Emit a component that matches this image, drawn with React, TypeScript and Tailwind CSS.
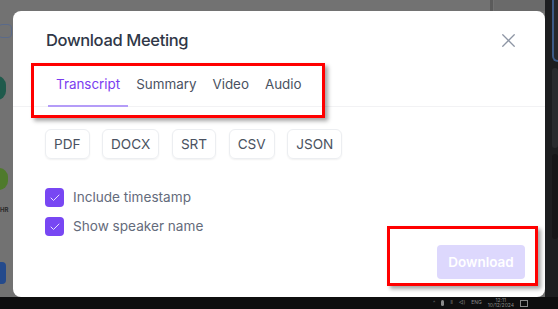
import { Check, X } from "lucide-react";

const TABS = ["Transcript", "Summary", "Video", "Audio"];
const FORMATS = ["PDF", "DOCX", "SRT", "CSV", "JSON"];
const OPTIONS = ["Include timestamp", "Show speaker name"];

export default function App() {
  return (
    <div
      className="relative w-[558px] h-[309px] overflow-hidden bg-[#727272] flex flex-col"
      style={{ fontFamily: "Inter, 'Noto Sans', sans-serif" }}
    >
      {/* dimmed app behind the dialog */}
      <div className="absolute left-[-2px] top-[24px] w-[14px] h-[14px] border border-[#5a6a8a] rounded-sm" />
      <div className="absolute left-[-12px] top-[76px] w-[18px] h-[24px] rounded-full bg-[#1f5a4c]" />
      <div className="absolute left-[-10px] top-[168px] w-[18px] h-[22px] rounded-full bg-[#4f7a2c]" />
      <div className="absolute left-0 top-[205px] text-[6px] font-bold text-[#2a2a2a]">HR</div>
      <div className="absolute left-[-4px] top-[262px] w-[10px] h-[22px] rounded-sm bg-[#244a8c]" />
      <div className="absolute left-[490px] top-0 w-[3px] h-[11px] bg-[#5b5b5b]" />
      <div className="absolute left-[494px] top-0 w-[51px] h-[11px] bg-[#6a6a6a]" />

      <div className="flex h-[297px]">
        <div className="w-[13px]" />
        <div className="w-[532px] flex flex-col">
          <div className="h-[11px]" />
          <div className="relative h-[286px] bg-white rounded-[8px] flex flex-col">
            {/* header */}
            <div className="flex items-center justify-between pl-[33px] pr-[25px] pt-[15px] h-[43px]">
              <h2 className="text-[16.5px] tracking-[-0.35px] leading-[28px] font-medium text-[#2f3747]">
                Download Meeting
              </h2>
              <X size={23} strokeWidth={1.3} className="text-[#8d95a4]" />
            </div>

            {/* tabs */}
            <div className="mt-[10px] flex px-[35px] border-b border-[#f2f2f4]">
              {TABS.map((t, i) => (
                <div
                  key={t}
                  className={`px-2 pt-[10px] pb-[11px] text-[13.4px] leading-[20px] border-b-2 -mb-px ${
                    i === 0 ? "text-[#7b3df0] border-[#b49cf8]" : "text-[#4a5261] border-transparent"
                  }`}
                >
                  {t}
                </div>
              ))}
            </div>

            {/* formats */}
            <div className="mt-[22px] flex gap-[12.5px] pl-[32px]">
              {FORMATS.map((f) => (
                <div
                  key={f}
                  className="h-[30px] px-[8px] flex items-center rounded-md border border-[#eceef1] shadow-[0_1px_2px_rgba(0,0,0,0.06)] text-[13.6px] text-[#4a5261]"
                >
                  {f}
                </div>
              ))}
            </div>

            {/* options */}
            <div className="mt-[29px] flex flex-col gap-[10px] pl-[32px]">
              {OPTIONS.map((o) => (
                <div key={o} className="flex items-center gap-[9px] h-[19px]">
                  <div className="w-[19px] h-[19px] rounded-[4px] bg-[#7847f3] flex items-center justify-center">
                    <Check size={12} strokeWidth={2} className="text-[#e9e2ff]" />
                  </div>
                  <span className="text-[13.6px] text-[#646b7b]">{o}</span>
                </div>
              ))}
            </div>

            {/* footer */}
            <div className="mt-[9px] flex justify-end pr-[20px]">
              <div className="h-[34px] w-[88px] rounded-[4px] bg-[#ddd8fd] flex items-center justify-center text-[13.5px] font-semibold text-white">
                Download
              </div>
            </div>

            {/* annotations */}
            <div className="absolute left-[18px] top-[52px] w-[294px] h-[55px] border-[3px] border-[#f00] shadow-[3px_3px_4px_rgba(0,0,0,0.35)]" />
            <div className="absolute left-[374px] top-[215px] w-[151px] h-[60px] border-[3px] border-[#f00] shadow-[3px_3px_4px_rgba(0,0,0,0.35)]" />
          </div>
        </div>
        <div className="w-[13px] bg-[#1d1e20] flex flex-col gap-[6px]">
          <div className="ml-[7px] h-[62px] rounded-bl-md border-l-2 border-b-2 border-[#3c5a86] bg-[#26282c]" />
          <div className="ml-[7px] h-[80px] rounded-md bg-[#2a2b2e]" />
          <div className="ml-[7px] h-[85px] rounded-md bg-[#161618]" />
        </div>
      </div>

      {/* taskbar */}
      <div className="h-[12px] bg-[#0e0e0f] flex items-center justify-end gap-[6px] pr-[30px] text-[5px] text-[#8a8a8a]">
        <span>^</span>
        <span className="w-[3px] h-[6px] bg-[#8a8a8a] rounded-sm" />
        <span>ll</span>
        <span>◁)</span>
        <span>ENG</span>
        <span className="leading-[5px] text-center">
          12:11
          <br />
          10/12/2024
        </span>
        <span className="w-[8px] h-[7px] border border-[#8a8a8a]" />
      </div>
    </div>
  );
}
